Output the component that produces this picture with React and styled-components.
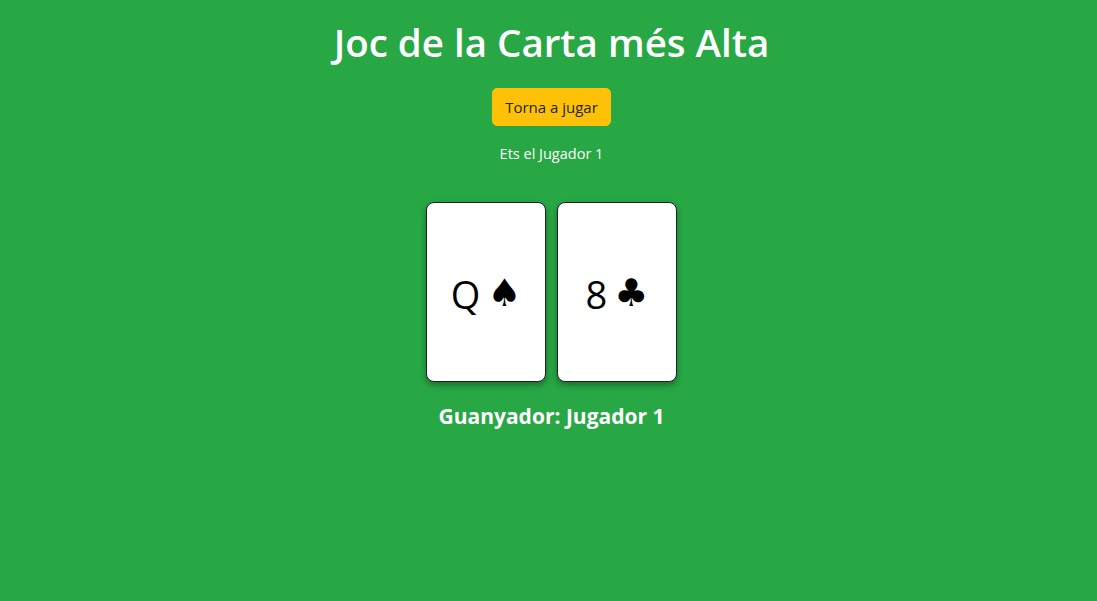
import React from 'react'
import styled, { createGlobalStyle } from 'styled-components'

const GlobalStyle = createGlobalStyle`
  html, body {
    margin: 0;
    padding: 0;
    background: #28a745;
    font-family: "Segoe UI", "Open Sans", "Noto Sans", sans-serif;
  }
`

const Page = styled.main`
  min-height: 601px;
  display: flex;
  flex-direction: column;
  align-items: center;
  padding: 18px 0 0 6px;
  color: white;
  box-sizing: border-box;
`

const Title = styled.h1`
  margin: 0;
  font-size: 38.5px;
  font-weight: 600;
  line-height: 48px;
`

const Button = styled.button`
  margin-top: 22px;
  background: #ffc107;
  color: #212529;
  border: 1px solid #ffc107;
  border-radius: 5px;
  font-family: inherit;
  font-size: 15px;
  line-height: 24px;
  padding: 6px 12px;
  cursor: pointer;
`

const Info = styled.p`
  margin: 18px 0 0;
  font-size: 14.5px;
  line-height: 20px;
`

const Table = styled.div`
  display: flex;
  gap: 11px;
  margin-top: 38px;
`

const Card = styled.div`
  width: 120px;
  height: 180px;
  box-sizing: border-box;
  background: white;
  border: 1px solid #222;
  border-radius: 8px;
  box-shadow: 0 3px 6px rgba(0, 0, 0, 0.35);
  display: flex;
  align-items: center;
  justify-content: center;
  gap: 7px;
  color: black;
  font-size: 38px;
  font-weight: 400;
  padding-top: 4px;
`

const Suit = styled.span`
  font-family: "DejaVu Sans", sans-serif;
  font-size: 38px;
  line-height: 1;
  margin-top: -2px;
`

const Winner = styled.h3`
  margin: 22px 0 0;
  font-size: 21px;
  font-weight: 700;
  line-height: 24px;
`

const cards = [
  { rank: 'Q', suit: '♠' },
  { rank: '8', suit: '♣' },
]

export default function App() {
  return (
    <>
      <GlobalStyle />
      <Page>
        <Title>Joc de la Carta més Alta</Title>
        <Button>Torna a jugar</Button>
        <Info>Ets el Jugador 1</Info>
        <Table>
          {cards.map((c) => (
            <Card key={c.rank + c.suit}>
              <span>{c.rank}</span>
              <Suit>{c.suit}</Suit>
            </Card>
          ))}
        </Table>
        <Winner>Guanyador: Jugador 1</Winner>
      </Page>
    </>
  )
}
